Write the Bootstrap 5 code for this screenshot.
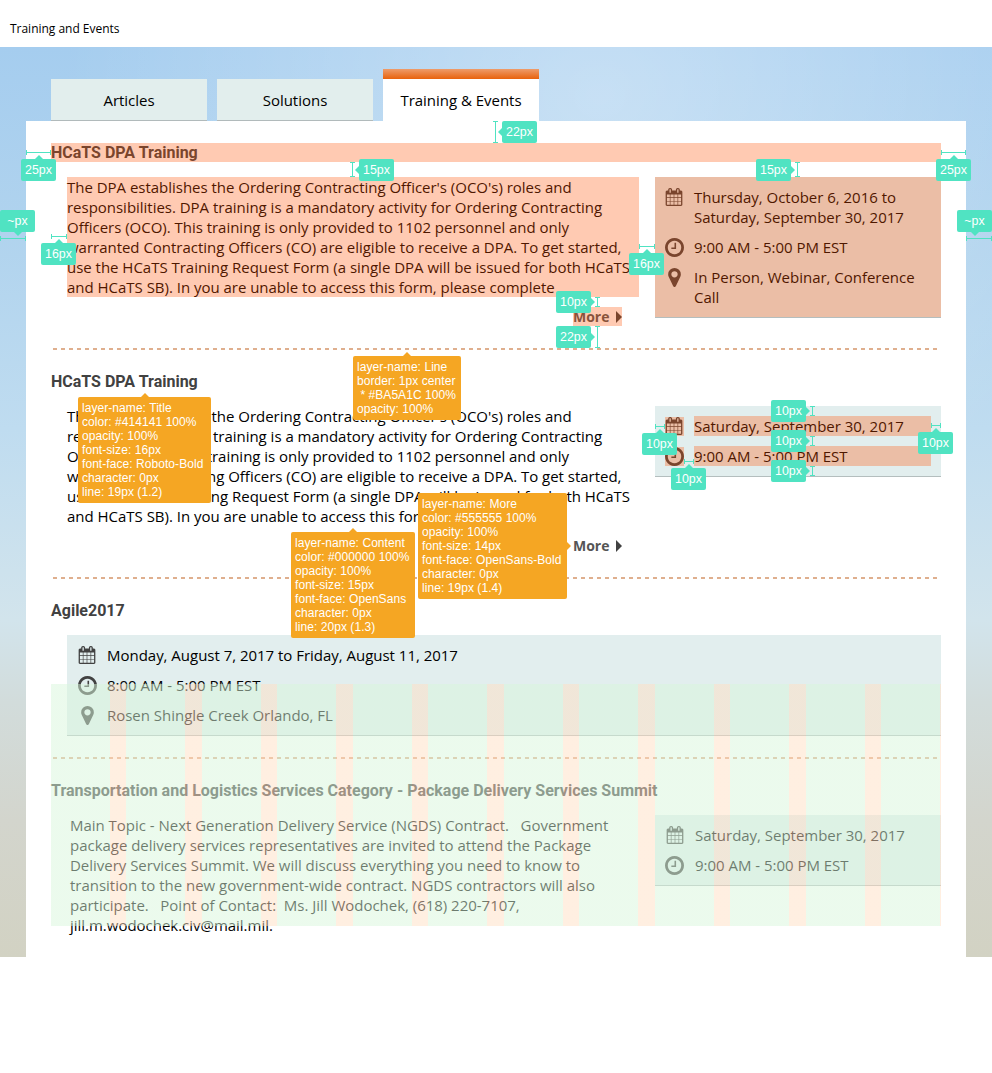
<!DOCTYPE html>
<html lang="en">
<head>
<meta charset="utf-8">
<meta name="viewport" content="width=device-width, initial-scale=1">
<title>Training and Events</title>
<link href="https://cdn.jsdelivr.net/npm/bootstrap@5.3.0/dist/css/bootstrap.min.css" rel="stylesheet">
<style>
  body { font: 15px/20px "Open Sans", "Noto Sans", sans-serif; letter-spacing: -.02px; color: #000; width: 992px; min-height: 1073px; background: #fff; }
  .page-label { height: 47px; padding: 21px 10px 10px; font-size: 12px; line-height: 16px; }
  .stage { height: 910px; padding: 22px 26px 0;
    background: radial-gradient(ellipse 540px 460px at 600px 50px, rgba(255,255,255,.36), rgba(255,255,255,0) 100%),
      linear-gradient(#a5cdef 0, #b0d3ee 20%, #bfdcf0 42%, #d2e4ec 63%, #d2dcdb 72%, #d3d5cd 85%, #d2d2c3 100%); }
  .tab-row { padding-left: 25px; gap: 10px; height: 52px; }
  .tab-item { width: 156px; height: 42px; background: #e2eeed; border-bottom: 1px solid #b1babb; color: #000; text-decoration: none; text-align: center; padding-top: 11px; }
  .tab-item.current { height: 52px; background: #fff; border: 0; padding-top: 0; }
  .tab-item.current::before { content: ""; display: block; height: 10px; margin-bottom: 11px; background: linear-gradient(#ee9c6b, #e8620c); }
  .panel { height: 836px; padding: 22px 25px 0; background: #fff; }
  h2.heading { font: bold 16px/19px Roboto, sans-serif; letter-spacing: 0; color: #414141; margin: 0 0 15px; white-space: nowrap; }
  .copy { width: 572px; margin-left: 16px; white-space: nowrap; }
  .copy.shifted { padding-left: 3px; }
  .more { font-weight: bold; font-size: 14px; line-height: 19px; color: #555; width: 49px; height: 19px; margin: 10px 0 0 522px; text-decoration: none; }
  .more svg { width: 6px; height: 12px; fill: #414141; }
  .dashes { height: 2px; margin: 22px 4px 22px 2px; background: repeating-linear-gradient(90deg, #dfaf8e 0 4px, transparent 4px 8px); }
  .dashes.raised { margin-top: 21px; }
  .facts { width: 286px; background: #e2eeee; border-bottom: 1px solid #b4bebe; padding: 10px; gap: 10px; white-space: nowrap; }
  .facts > div { gap: 10px; }
  .facts.late > div { gap: 11px; }
  .facts.wide { width: 874px; margin-left: 16px; padding-left: 11px; }
  .facts .symbol { width: 19px; height: 19px; flex: none; margin-top: 1px; }
  .facts svg { display: block; width: 19px; height: 19px; fill: #414141; }
  .facts svg.cal { width: 18px; height: 18px; }
  .tinted { position: relative; }
  .tinted::after { content: ""; position: absolute; inset: 0; background: rgba(255,79,0,.3); }
  .columns-overlay { position: absolute; left: 51px; top: 684px; width: 890px; height: 242px;
    background: repeating-linear-gradient(90deg, rgba(216,246,219,.5) 0 59px, rgba(255,223,195,.5) 59px 75px, rgba(245,250,240,.5) 75px 75.5px); }
  .tag, .spec { position: absolute; font: 12px/14px "Liberation Sans", sans-serif; letter-spacing: .06px; color: #fff; border-radius: 2px; }
  .tag { width: 35px; height: 22px; background: #50e3c2; text-align: center; font-size: 12.4px; line-height: 22px; }
  .spec { background: #f5a623; padding: 4px; white-space: pre; }
  .tag::before, .spec::before { content: ""; position: absolute; border: 4px solid transparent; }
  .up::before { left: 50%; top: -8px; margin-left: -4px; }
  .down::before { left: 50%; bottom: -8px; margin-left: -4px; }
  .to-left::before { left: -8px; top: 50%; margin-top: -4px; }
  .to-right::before { right: -8px; top: 50%; margin-top: -4px; }
  .tag.up::before { border-bottom-color: #50e3c2; }
  .tag.down::before { border-top-color: #50e3c2; }
  .tag.to-left::before { border-right-color: #50e3c2; }
  .tag.to-right::before { border-left-color: #50e3c2; }
  .spec.up::before { border-bottom-color: #f5a623; }
  .spec.to-right::before { border-left-color: #f5a623; }
  .gauge { position: absolute; }
  .gauge.h { height: 5px; border: solid #50e3c2; border-width: 0 1px; background: linear-gradient(#50e3c2, #50e3c2) 0 2px / 100% 1px no-repeat; }
  .gauge.v { width: 5px; border: solid #50e3c2; border-width: 1px 0; background: linear-gradient(#50e3c2, #50e3c2) 2px 0 / 1px 100% no-repeat; }
</style>
</head>
<body class="position-relative">
<svg width="0" height="0" class="position-absolute">
  <symbol id="calendar" viewBox="0 0 1664 1792"><path d="M128 1664h288v-288h-288v288zm352 0h320v-288h-320v288zm-352-352h288v-320h-288v320zm352 0h320v-320h-320v320zm-352-384h288v-288h-288v288zm736 736h320v-288h-320v288zm-384-736h320v-288h-320v288zm768 736h288v-288h-288v288zm-384-352h320v-320h-320v320zm-352-864v-288q0-13-9.5-22.5t-22.5-9.5h-64q-13 0-22.5 9.5t-9.5 22.5v288q0 13 9.5 22.5t22.5 9.5h64q13 0 22.5-9.5t9.5-22.5zm736 864h288v-320h-288v320zm-384-384h320v-288h-320v288zm384 0h288v-288h-288v288zm32-480v-288q0-13-9.5-22.5t-22.5-9.5h-64q-13 0-22.5 9.5t-9.5 22.5v288q0 13 9.5 22.5t22.5 9.5h64q13 0 22.5-9.5t9.5-22.5zm384-64v1280q0 52-38 90t-90 38h-1408q-52 0-90-38t-38-90v-1280q0-52 38-90t90-38h128v-96q0-66 47-113t113-47h64q66 0 113 47t47 113v96h384v-96q0-66 47-113t113-47h64q66 0 113 47t47 113v96h128q52 0 90 38t38 90z"/></symbol>
  <symbol id="clock" viewBox="0 128 1536 1536"><path d="M896 544v448q0 14-9 23t-23 9h-320q-14 0-23-9t-9-23v-64q0-14 9-23t23-9h224v-352q0-14 9-23t23-9h64q14 0 23 9t9 23zm416 352q0-148-73-273t-198-198-273-73-273 73-198 198-73 273 73 273 198 198 273 73 273-73 198-198 73-273zm224 0q0 209-103 385.5t-279.5 279.5-385.5 103-385.5-103-279.5-279.5-103-385.5 103-385.5 279.5-279.5 385.5-103 385.5 103 279.5 279.5 103 385.5z"/></symbol>
  <symbol id="marker" viewBox="0 128 1024 1536"><path d="M768 640q0-106-75-181t-181-75-181 75-75 181 75 181 181 75 181-75 75-181zm256 0q0 109-33 179l-364 774q-16 33-47.5 52t-67.5 19-67.5-19-46.5-52l-365-774q-33-70-33-179 0-212 150-362t362-150 362 150 150 362z"/></symbol>
</svg>

<header class="page-label">Training and Events</header>
<main class="stage">
  <nav class="tab-row d-flex align-items-end">
    <a class="tab-item">Articles</a>
    <a class="tab-item">Solutions</a>
    <a class="tab-item current">Training &amp; Events</a>
  </nav>
  <div class="panel">
    <section>
      <h2 class="heading tinted">HCaTS DPA Training</h2>
      <div class="d-flex justify-content-between align-items-start">
        <div>
          <div class="copy tinted">The DPA establishes the Ordering Contracting Officer's (OCO's) roles and<br>responsibilities. DPA training is a mandatory activity for Ordering Contracting<br>Officers (OCO). This training is only provided to 1102 personnel and only<br>warranted Contracting Officers (CO) are eligible to receive a DPA. To get started,<br>use the HCaTS Training Request Form (a single DPA will be issued for both HCaTS<br>and HCaTS SB). In you are unable to access this form, please complete</div>
          <a class="more tinted d-flex justify-content-between align-items-center">More <svg viewBox="0 0 6 12"><path d="M0 0 6 6 0 12z"/></svg></a>
        </div>
        <div class="facts tinted d-flex flex-column">
          <div class="d-flex"><span class="symbol"><svg class="cal"><use href="#calendar"/></svg></span><span>Thursday, October 6, 2016 to<br>Saturday, September 30, 2017</span></div>
          <div class="d-flex"><span class="symbol"><svg><use href="#clock"/></svg></span><span>9:00 AM - 5:00 PM EST</span></div>
          <div class="d-flex"><span class="symbol"><svg><use href="#marker"/></svg></span><span>In Person, Webinar, Conference<br>Call</span></div>
        </div>
      </div>
    </section>
    <div class="dashes"></div>
    <section>
      <h2 class="heading">HCaTS DPA Training</h2>
      <div class="d-flex justify-content-between align-items-start">
        <div>
          <div class="copy">The DPA establishes the Ordering Contracting Officer's (OCO's) roles and<br>responsibilities. DPA training is a mandatory activity for Ordering Contracting<br>Officers (OCO). This training is only provided to 1102 personnel and only<br>warranted Contracting Officers (CO) are eligible to receive a DPA. To get started,<br>use the HCaTS Training Request Form (a single DPA will be issued for both HCaTS<br>and HCaTS SB). In you are unable to access this form, please complete</div>
          <a class="more d-flex justify-content-between align-items-center">More <svg viewBox="0 0 6 12"><path d="M0 0 6 6 0 12z"/></svg></a>
        </div>
        <div class="facts d-flex flex-column">
          <div class="d-flex"><span class="symbol tinted"><svg class="cal"><use href="#calendar"/></svg></span><span class="tinted flex-grow-1">Saturday, September 30, 2017</span></div>
          <div class="d-flex"><span class="symbol tinted"><svg><use href="#clock"/></svg></span><span class="tinted flex-grow-1">9:00 AM - 5:00 PM EST</span></div>
        </div>
      </div>
    </section>
    <div class="dashes"></div>
    <section>
      <h2 class="heading">Agile2017</h2>
      <div class="facts wide d-flex flex-column">
        <div class="d-flex"><span class="symbol"><svg class="cal"><use href="#calendar"/></svg></span><span>Monday, August 7, 2017 to Friday, August 11, 2017</span></div>
        <div class="d-flex"><span class="symbol"><svg><use href="#clock"/></svg></span><span>8:00 AM - 5:00 PM EST</span></div>
        <div class="d-flex"><span class="symbol"><svg><use href="#marker"/></svg></span><span>Rosen Shingle Creek Orlando, FL</span></div>
      </div>
    </section>
    <div class="dashes raised"></div>
    <section>
      <h2 class="heading">Transportation and Logistics Services Category - Package Delivery Services Summit</h2>
      <div class="d-flex justify-content-between align-items-start">
        <div class="copy shifted">Main Topic - Next Generation Delivery Service (NGDS) Contract. &nbsp; Government<br>package delivery services representatives are invited to attend the Package<br>Delivery Services Summit. We will discuss everything you need to know to<br>transition to the new government-wide contract. NGDS contractors will also<br>participate. &nbsp; Point of Contact: &nbsp;Ms. Jill Wodochek, (618) 220-7107,<br>jill.m.wodochek.civ@mail.mil.</div>
        <div class="facts late d-flex flex-column">
          <div class="d-flex"><span class="symbol"><svg class="cal ms-auto"><use href="#calendar"/></svg></span><span>Saturday, September 30, 2017</span></div>
          <div class="d-flex"><span class="symbol"><svg><use href="#clock"/></svg></span><span>9:00 AM - 5:00 PM EST</span></div>
        </div>
      </div>
    </section>
  </div>
</main>

<div class="columns-overlay"></div>
<div id="notes"></div>

<script src="https://cdn.jsdelivr.net/npm/bootstrap@5.3.0/dist/js/bootstrap.bundle.min.js"></script>
<script>
  // [axis, x, y, length, label, label x, label y, pointer side]
  const gauges = [
    ['h', 26, 150, 25, '25px', 21, 159, 'up'],
    ['h', 0, 236, 26, '~px', 0, 210, 'down'],
    ['h', 51, 234, 16, '16px', 41, 243, 'up'],
    ['v', 493, 121, 22, '22px', 502, 121, 'to-left'],
    ['v', 350, 162, 15, '15px', 359, 159, 'to-left'],
    ['v', 795, 162, 15, '15px', 756, 159, 'to-right'],
    ['h', 941, 150, 25, '25px', 936, 159, 'up'],
    ['h', 966, 236, 26, '~px', 957, 210, 'down'],
    ['h', 639, 244, 16, '16px', 629, 253, 'up'],
    ['v', 595, 297, 10, '10px', 556, 291, 'to-right'],
    ['v', 595, 326, 22, '22px', 556, 326, 'to-right'],
    ['v', 810, 406, 10, '10px', 771, 400, 'to-right'],
    ['v', 810, 436, 10, '10px', 771, 430, 'to-right'],
    ['v', 810, 466, 10, '10px', 771, 460, 'to-right'],
    ['h', 655, 424, 10, '10px', 642, 433, 'up'],
    ['h', 931, 423, 10, '10px', 918, 432, 'up'],
    ['h', 684, 459, 10, '10px', 671, 468, 'up']
  ];
  const specs = [
    [78, 397, 133, 'up', 'layer-name: Title\ncolor: #414141 100%\nopacity: 100%\nfont-size: 16px\nfont-face: Roboto-Bold\ncharacter: 0px\nline: 19px (1.2)'],
    [353, 356, 108, 'up', 'layer-name: Line\nborder: 1px center\n * #BA5A1C 100%\nopacity: 100%'],
    [291, 532, 124, 'up', 'layer-name: Content\ncolor: #000000 100%\nopacity: 100%\nfont-size: 15px\nfont-face: OpenSans\ncharacter: 0px\nline: 20px (1.3)'],
    [418, 493, 149, 'to-right', 'layer-name: More\ncolor: #555555 100%\nopacity: 100%\nfont-size: 14px\nfont-face: OpenSans-Bold\ncharacter: 0px\nline: 19px (1.4)']
  ];
  const notes = document.getElementById('notes');
  function place(cls, x, y, text) {
    const el = document.createElement('div');
    el.className = cls;
    el.style.left = x + 'px';
    el.style.top = y + 'px';
    if (text) el.textContent = text;
    notes.append(el);
    return el;
  }
  for (const [axis, x, y, len, label, lx, ly, side] of gauges) {
    place('gauge ' + axis, x, y).style[axis === 'h' ? 'width' : 'height'] = len + 'px';
    place('tag ' + side, lx, ly, label);
  }
  for (const [x, y, w, side, text] of specs) place('spec ' + side, x, y, text).style.width = w + 'px';
</script>
</body>
</html>
